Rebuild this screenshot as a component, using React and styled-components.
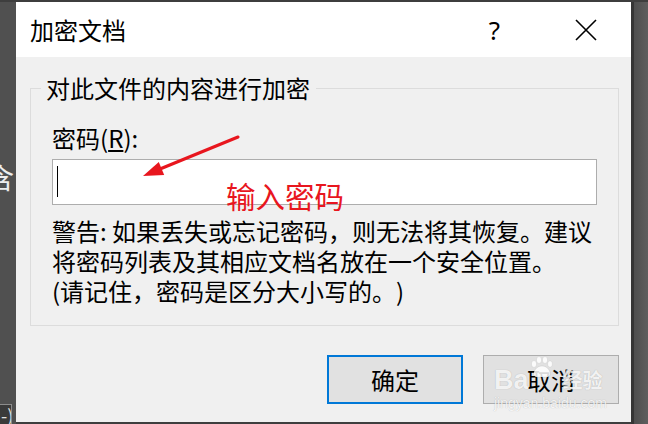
import styled, { createGlobalStyle } from "styled-components";

const GlobalStyle = createGlobalStyle`
  body {
    margin: 0;
    background: #3e3e3e;
    font-family: "Noto Sans CJK SC", "Noto Sans", sans-serif;
    text-spacing-trim: space-all;
  }
`;

const Screen = styled.div`
  display: flex;
  width: 648px;
  height: 424px;
  overflow: hidden;
  background: #3e3e3e;
`;

const LeftStrip = styled.div`
  display: flex;
  flex-direction: column;
  width: 16px;
  margin-top: 2px;
  overflow: hidden;
  background: #505050;
`;

const HiddenChar = styled.span`
  margin: 158px 0 0 -14px;
  font-size: 28px;
  line-height: 34px;
  color: #ececec;
  white-space: nowrap;
`;

const CornerBox = styled.div`
  margin-top: auto;
  width: 11px;
  height: 19px;
  border-top: 1px solid #8c8c8c;
  border-right: 1px solid #8c8c8c;
  background: #3a3a3a;
  color: #e0e0e0;
  font-size: 18px;
  line-height: 20px;
  overflow: hidden;
  text-indent: 1px;
`;

const RightStrip = styled.div`
  flex: 1;
  margin-top: 2px;
  border-left: 3px solid #353535;
  background: linear-gradient(90deg, #4e4e4e, #5e5e5e);
`;

const Window = styled.div`
  position: relative;
  display: flex;
  flex-direction: column;
  width: 615px;
  height: 420px;
  margin-top: 2px;
  background: #f0f0f0;
`;

const TitleBar = styled.div`
  display: flex;
  align-items: center;
  height: 55px;
  padding-left: 14px;
  background: #ffffff;
`;

const Title = styled.span`
  flex: 1;
  font-size: 24px;
  color: #000;
`;

const TitleButton = styled.div`
  display: flex;
  align-items: center;
  justify-content: center;
  width: 91px;
  height: 55px;
  font-family: "Noto Sans", "DejaVu Sans", sans-serif;
  font-size: 26px;
  color: #000;
`;

const Body = styled.div`
  display: flex;
  flex-direction: column;
  padding: 0 12px 0 14px;
`;

const Group = styled.fieldset`
  margin: 15px 0 0;
  padding: 0 21px 19px;
  border: 1px solid #dcdcdc;
  min-width: 0;
`;

const Legend = styled.legend`
  margin-left: -11px;
  padding: 0 6px 0 5px;
  font-size: 24px;
  line-height: 32px;
  color: #000;
`;

const Label = styled.div`
  margin-top: 19px;
  font-size: 24px;
  line-height: 30px;
  color: #000;
`;

const PasswordBox = styled.div`
  box-sizing: border-box;
  height: 46px;
  margin-top: 6px;
  padding: 6px 4px;
  border: 1px solid #adadad;
  background: #ffffff;
`;

const Caret = styled.div`
  width: 1px;
  height: 31px;
  background: #000;
`;

const Warning = styled.div`
  margin-top: 11px;
  font-size: 24px;
  line-height: 30px;
  color: #000;
  white-space: nowrap;
`;

const ButtonRow = styled.div`
  display: flex;
  justify-content: flex-end;
  gap: 20px;
  margin-top: 29px;
`;

const Button = styled.div`
  box-sizing: border-box;
  display: flex;
  align-items: center;
  justify-content: center;
  width: 136px;
  height: 49px;
  border: ${(p) => (p.$primary ? "2px solid #0078d7" : "1px solid #adadad")};
  background: #e1e1e1;
  font-size: 24px;
  color: #000;
`;

const Arrow = styled.svg`
  position: absolute;
  left: 120px;
  top: 125px;
`;

const Note = styled.span`
  position: absolute;
  left: 210px;
  top: 179px;
  font-size: 29.5px;
  line-height: 29.5px;
  color: #e8161e;
  white-space: nowrap;
`;

const Watermark = styled.div`
  position: absolute;
  left: 478px;
  top: 352px;
  display: flex;
  flex-direction: column;
  color: rgba(255, 255, 255, 0.85);
  text-shadow: 0 0 1px rgba(0, 0, 0, 0.25);
  pointer-events: none;
`;

const MarkTop = styled.div`
  display: flex;
  align-items: flex-end;
  height: 40px;
`;

const MarkLatin = styled.span`
  font-family: "Liberation Sans", Arial, sans-serif;
  font-weight: bold;
  font-size: 27px;
  line-height: 28px;
`;

const MarkCjk = styled.span`
  margin-left: 10px;
  font-size: 20px;
  line-height: 28px;
  font-weight: bold;
`;

const MarkUrl = styled.span`
  margin-top: 2px;
  font-family: "Liberation Sans", Arial, sans-serif;
  font-size: 14px;
  line-height: 14px;
`;

function Paw() {
  return (
    <svg width="24" height="40" viewBox="0 0 24 40" style={{ alignSelf: "flex-start", marginTop: 2 }}>
      <g fill="rgba(255,255,255,0.85)" stroke="rgba(0,0,0,0.12)" strokeWidth="0.6">
        <ellipse cx="5" cy="8" rx="2.6" ry="3.4" />
        <ellipse cx="10" cy="4" rx="2.6" ry="3.4" />
        <ellipse cx="16" cy="4" rx="2.6" ry="3.4" />
        <ellipse cx="21" cy="8" rx="2.4" ry="3.2" />
        <path d="M13 10 C7 10 4 16 5 19 C6 22 9 21 13 21 C17 21 20 22 21 19 C22 16 19 10 13 10 Z" />
      </g>
    </svg>
  );
}

function CloseIcon() {
  return (
    <svg width="22" height="22" viewBox="0 0 22 22">
      <path d="M1 1 L21 21 M21 1 L1 21" stroke="#000" strokeWidth="1.6" fill="none" />
    </svg>
  );
}

export default function App() {
  return (
    <Screen>
      <GlobalStyle />
      <LeftStrip>
        <HiddenChar>含</HiddenChar>
        <CornerBox>-)</CornerBox>
      </LeftStrip>
      <Window>
        <TitleBar>
          <Title>加密文档</Title>
          <TitleButton>?</TitleButton>
          <TitleButton>
            <CloseIcon />
          </TitleButton>
        </TitleBar>
        <Body>
          <Group>
            <Legend>对此文件的内容进行加密</Legend>
            <Label>
              密码(<u>R</u>):
            </Label>
            <PasswordBox>
              <Caret />
            </PasswordBox>
            <Warning>
              警告: 如果丢失或忘记密码，则无法将其恢复。建议
              <br />
              将密码列表及其相应文档名放在一个安全位置。
              <br />
              (请记住，密码是区分大小写的。)
            </Warning>
          </Group>
          <ButtonRow>
            <Button $primary>确定</Button>
            <Button>取消</Button>
          </ButtonRow>
        </Body>
        <Arrow width="130" height="60" viewBox="0 0 130 60">
          <line x1="102" y1="10" x2="24" y2="42" stroke="#e8161e" strokeWidth="3" strokeLinecap="round" />
          <polygon points="7,49 22.8,34.9 28.2,47.9" fill="#e8161e" />
        </Arrow>
        <Note>输入密码</Note>
        <Watermark>
          <MarkTop>
            <MarkLatin>Ba</MarkLatin>
            <Paw />
            <MarkCjk>经验</MarkCjk>
          </MarkTop>
          <MarkUrl>jingyan.baidu.com</MarkUrl>
        </Watermark>
      </Window>
      <RightStrip />
    </Screen>
  );
}
